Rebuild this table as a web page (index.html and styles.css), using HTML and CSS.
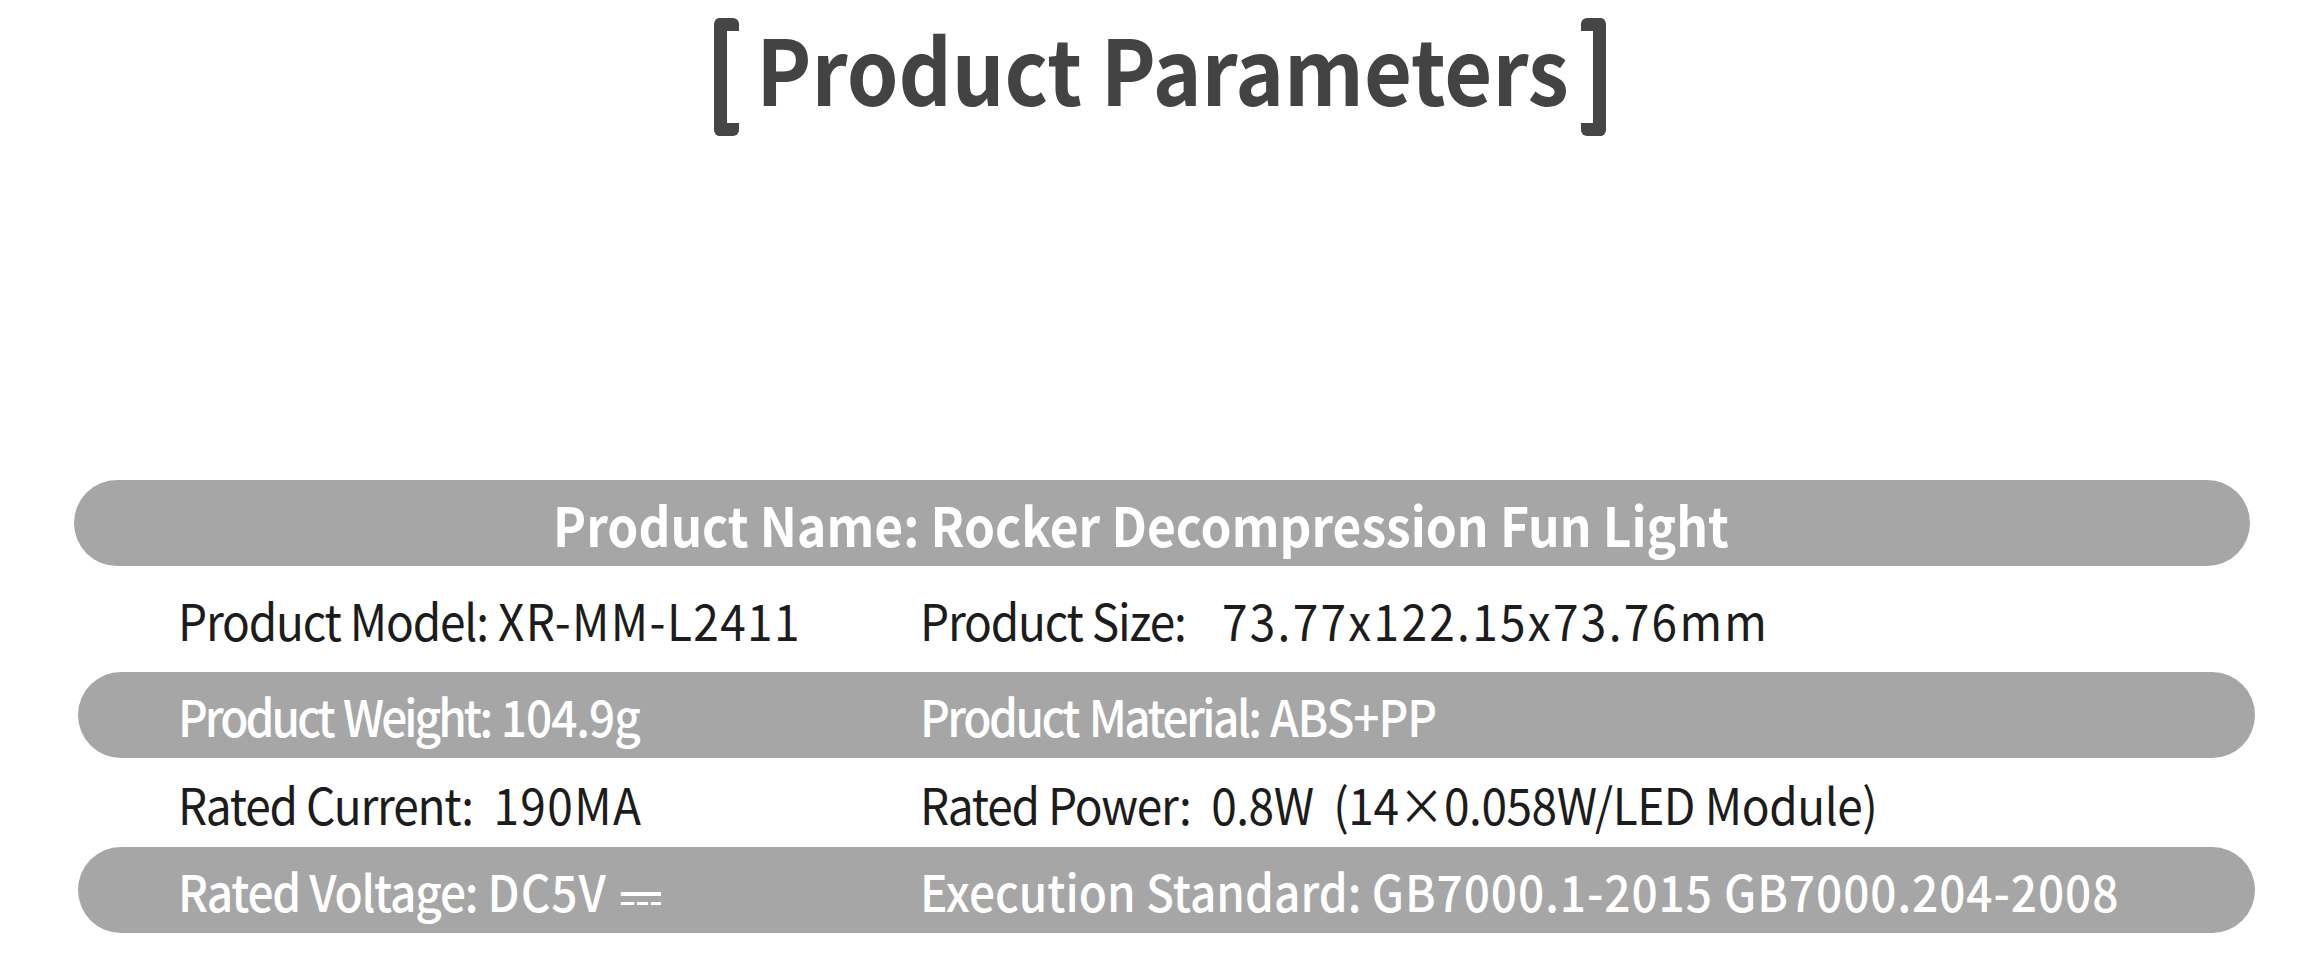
FILE: index.html
```html
<!DOCTYPE html>
<html lang="en">
<head>
<meta charset="utf-8">
<title>Product Parameters</title>
<link rel="stylesheet" href="styles.css">
</head>
<body>
<div class="page">
  <header class="title">
    <span class="bracket bracket-left"></span>
    <h1 class="title-text">Product Parameters</h1>
    <span class="bracket bracket-right"></span>
  </header>

  <section class="params">
    <div class="pill pill-head"><span class="sq sq-center">Product Name: Rocker Decompression Fun Light</span></div>

    <div class="row row-plain row-first">
      <div class="cell"><span class="sq"><span class="lbl">Product Model:</span> <span class="val">XR-MM-L2411</span></span></div>
      <div class="cell"><span class="sq"><span class="lbl">Product Size:</span>&nbsp;&nbsp; <span class="val val-wide">73.77x122.15x73.76mm</span></span></div>
    </div>

    <div class="row pill">
      <div class="cell"><span class="sq"><span class="lbl lbl-tight">Product Weight:</span> <span class="val val-tight">104.9g</span></span></div>
      <div class="cell"><span class="sq"><span class="lbl lbl-semi">Product Material:</span> <span class="val val-tight">ABS+PP</span></span></div>
    </div>

    <div class="row row-plain">
      <div class="cell"><span class="sq"><span class="lbl">Rated Current:</span>&nbsp; <span class="val">190MA</span></span></div>
      <div class="cell"><span class="sq"><span class="lbl">Rated Power:</span>&nbsp; <span class="val val-plain">0.8W &nbsp;(14×0.058W/LED Module)</span></span></div>
    </div>

    <div class="row pill">
      <div class="cell"><span class="sq"><span class="lbl">Rated Voltage:</span> <span class="val val-mid">DC5V</span><svg class="dc" viewBox="0 0 44 14" width="44" height="14"><line class="solid" x1="0" y1="2" x2="44" y2="2"/><line x1="0" y1="11.5" x2="15" y2="11.5"/><line x1="18" y1="11.5" x2="30" y2="11.5"/><line x1="33" y1="11.5" x2="44" y2="11.5"/></svg></span></div>
      <div class="cell"><span class="sq"><span class="lbl lbl-plain">Execution Standard:</span> <span class="val val-mid">GB7000.1-2015 GB7000.204-2008</span></span></div>
    </div>
  </section>
</div>
</body>
</html>
```

FILE: styles.css
```css
* { box-sizing: border-box; }

html, body {
  margin: 0;
  padding: 0;
  background: #ffffff;
}

.page {
  width: 2320px;
  height: 970px;
  font-family: "Noto Sans CJK SC", "Noto Sans", sans-serif;
  overflow: hidden;
}

.title {
  display: flex;
  justify-content: center;
  align-items: center;
  padding-top: 18px;
  height: 136px;
}

.bracket {
  width: 25px;
  height: 118px;
  border: 13px solid #454545;
  border-radius: 6px;
  flex: none;
}
.bracket-left { border-right: none; margin-right: 17px; }
.bracket-right { border-left: none; margin-left: 12px; }

.title-text {
  margin: 0 -35px 20px;
  font-family: "Noto Sans CJK SC", "Open Sans", sans-serif;
  font-weight: 700;
  font-size: 90px;
  line-height: 118px;
  color: #434343;
  white-space: nowrap;
  transform: scaleX(0.92);
  transform-origin: center;
}

.params {
  margin-top: 344px;
  margin-left: 74px;
  width: 2181px;
}

.pill {
  background: #a6a6a6;
  border-radius: 43px;
  height: 86px;
  color: #ffffff;
}

.pill-head {
  width: 2176px;
  display: flex;
  justify-content: center;
  align-items: center;
  padding-right: 42px;
  font-weight: 700;
  font-size: 54px;
}

.row {
  display: grid;
  grid-template-columns: 742px 1fr;
  align-items: center;
  padding-left: 100px;
  font-size: 50px;
  margin-left: 4px;
}

.row.pill { font-weight: 500; }

.row-plain {
  height: 89px;
  color: #1c1c1c;
  font-weight: 400;
}

.row-first { height: 106px; }

.cell {
  white-space: nowrap;
  line-height: 60px;
}

.sq {
  display: inline-block;
  transform: scaleX(0.92);
  transform-origin: left center;
}

.sq-center { transform-origin: center; }

/* label / value fine spacing */
.lbl { letter-spacing: -1.3px; }
.lbl-tight { letter-spacing: -3.2px; word-spacing: 3px; }
.lbl-semi { letter-spacing: -2.7px; word-spacing: 3px; }
.lbl-plain { letter-spacing: 0; }

.val { letter-spacing: 1.5px; }
.val-wide { letter-spacing: 2.5px; margin-left: 6px; }
.val-tight { letter-spacing: -1.1px; }
.val-mid { letter-spacing: 1px; }
.val-plain { letter-spacing: -0.5px; }

.dc {
  margin-left: 15px;
  vertical-align: 6px;
  stroke: #ffffff;
  stroke-width: 3;
  fill: none;
}
.dc .solid { stroke-width: 4; }
```
